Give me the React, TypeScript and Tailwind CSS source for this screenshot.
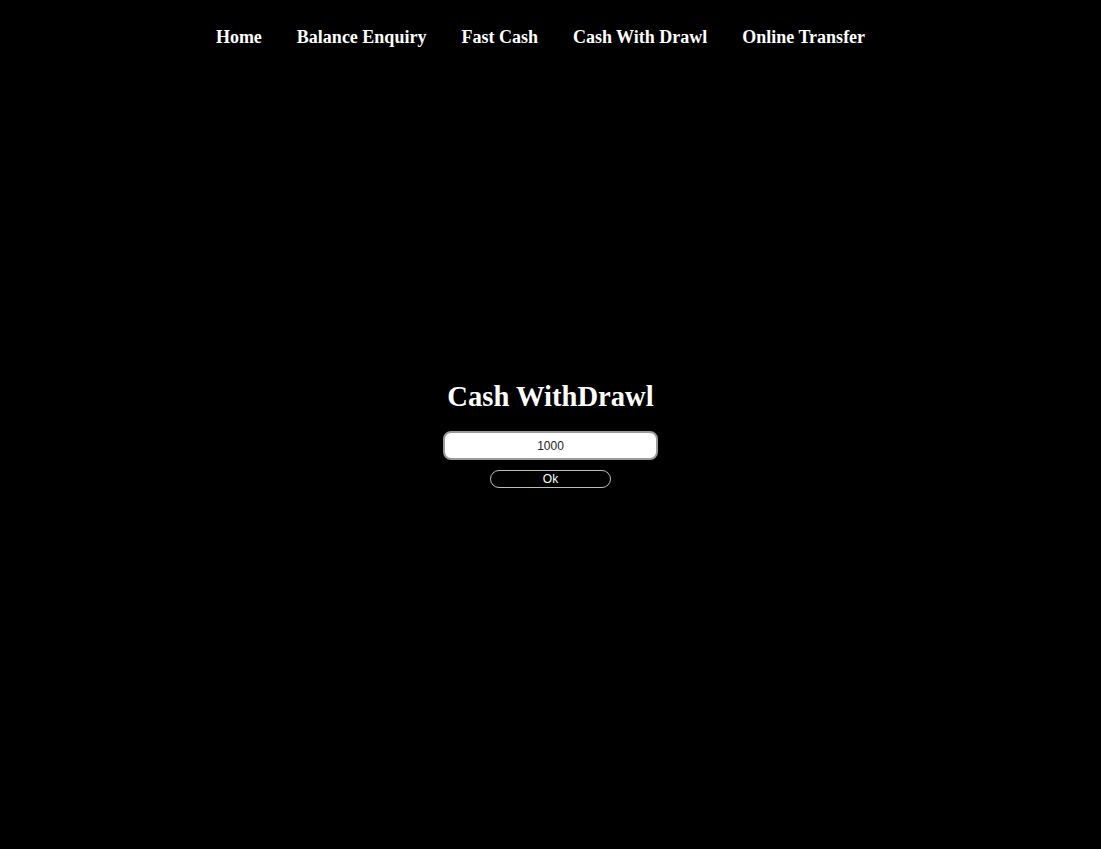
import React from "react";

export default function App() {
  const links = ["Home", "Balance Enquiry", "Fast Cash", "Cash With Drawl", "Online Transfer"];
  return (
    <div className="min-h-[849px] w-full bg-black text-white flex flex-col items-center">
      <nav className="w-full flex justify-center pr-[20px] pt-[25px]">
        <ul className="flex gap-[35px]">
          {links.map((l) => (
            <li key={l}>
              <a className="text-[18px] font-bold leading-[22px] text-white" style={{ fontFamily: '"Liberation Serif", "Times New Roman", serif' }}>
                {l}
              </a>
            </li>
          ))}
        </ul>
      </nav>
      <div className="flex flex-col items-center mt-[331px]">
        <h2 className="text-[28.6px] font-bold leading-[34px]" style={{ fontFamily: '"Liberation Serif", "Times New Roman", serif' }}>
          Cash WithDrawl
        </h2>
        <input
          defaultValue="1000"
          className="mt-[17px] w-[215px] h-[29px] rounded-[8px] bg-white border-2 border-[#9a9a9a] text-center text-[12px] text-[#222] outline-none"
          style={{ fontFamily: '"Liberation Sans", Arial, sans-serif' }}
        />
        <button
          className="mt-[10px] w-[121px] h-[18px] rounded-full border border-[#bdbdbd] bg-black text-white text-[12px] leading-[14px]"
          style={{ fontFamily: '"Liberation Sans", Arial, sans-serif' }}
        >
          Ok
        </button>
      </div>
    </div>
  );
}
